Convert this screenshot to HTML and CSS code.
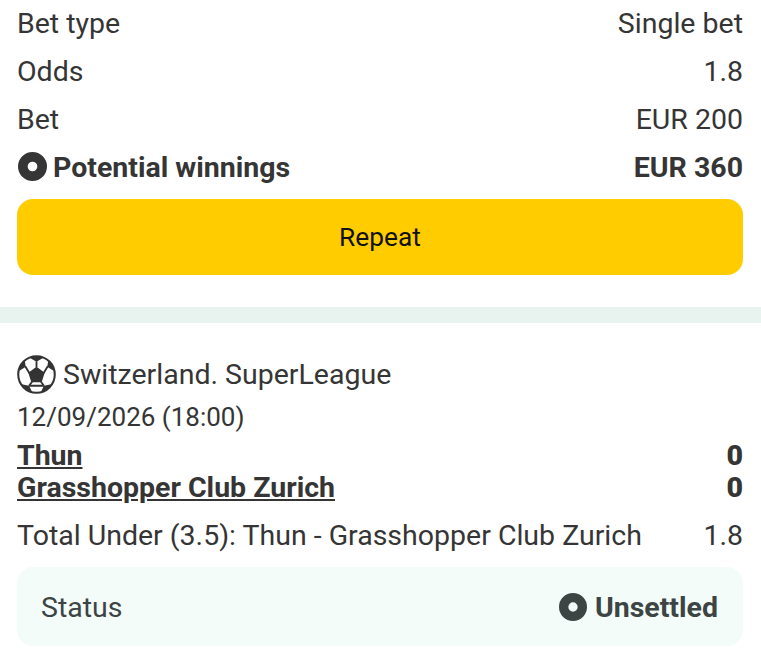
FILE: index.html
```html
<!DOCTYPE html>
<html lang="en">
<head>
<meta charset="utf-8">
<title>Bet details</title>
<link rel="stylesheet" href="styles.css">
</head>
<body>
<section class="summary">
  <div class="row"><span>Bet type</span><span>Single bet</span></div>
  <div class="row"><span>Odds</span><span>1.8</span></div>
  <div class="row"><span>Bet</span><span>EUR 200</span></div>
  <div class="row strong">
    <span class="with-icon"><svg class="dot" viewBox="0 0 30 30"><circle cx="15" cy="15" r="10" fill="none" stroke="currentColor" stroke-width="10"/></svg>Potential winnings</span>
    <span>EUR 360</span>
  </div>
  <button class="repeat">Repeat</button>
</section>
<div class="divider"></div>
<section class="event">
  <div class="league">
    <svg class="ball" viewBox="0 0 38 38">
      <circle cx="19" cy="19" r="17.800" fill="#fff" stroke="#333" stroke-width="2"/>
      <path fill="#333" d="M19 11.500l8 5.800-3 9.200h-10l-3-9.200zM11.500 2.200c5-1.600 10-1.600 15 0l-7.500 4.300zM2 15.500c.6-4.200 2.600-7.800 5.500-10.500l1 6.500zM36 15.500c-.6-4.200-2.600-7.800-5.500-10.500l-1 6.500zM4.500 28.500l7.300 1.500 3 6.200c-4.200-.9-7.800-3.900-10.300-7.700zM33.500 28.500l-7.300 1.500-3 6.200c4.200-.9 7.800-3.900 10.300-7.700z"/>
      <path fill="none" stroke="#333" stroke-width="1.800" d="M19 6v6M8 11l4 6.500M30 11l-4 6.500M14.700 26l-3 4M23.300 26l3 4M11.700 30h14.600"/>
    </svg>
    <span>Switzerland. SuperLeague</span>
  </div>
  <div class="date">12/09/2026 (18:00)</div>
  <div class="teams">
    <div class="team"><a href="#">Thun</a><b>0</b></div>
    <div class="team"><a href="#">Grasshopper Club Zurich</a><b>0</b></div>
  </div>
  <div class="row pick"><span>Total Under (3.5): Thun - Grasshopper Club Zurich</span><span>1.8</span></div>
  <div class="status">
    <span>Status</span>
    <span class="state"><svg class="dot" viewBox="0 0 30 30"><circle cx="15" cy="15" r="10" fill="none" stroke="currentColor" stroke-width="10"/></svg>Unsettled</span>
  </div>
</section>
</body>
</html>
```
FILE: styles.css
```css
* { box-sizing: border-box; }
html, body { margin: 0; padding: 0; }
body {
  width: 761px;
  height: 659px;
  overflow: hidden;
  background: #fff;
  color: #353535;
  font-family: Roboto, sans-serif;
  font-size: 28.5px;
  line-height: 48px;
}
.summary { padding: 0 18px 32px 17px; }
.row { display: flex; justify-content: space-between; height: 48px; }
.strong { font-weight: 700; }
.with-icon { display: flex; align-items: center; gap: 6px; }
.dot { width: 29px; height: 29px; flex: none; margin: 0 0 3px 1px; }
.repeat {
  display: block;
  width: 726px;
  height: 76px;
  margin-top: 7px;
  border: 0;
  border-radius: 16px;
  background: #ffcc00;
  color: #111;
  font: 400 26.300px Roboto, sans-serif;
}
.divider { height: 16px; background: #e8f2ef; }
.event { padding: 28px 18px 0 17px; }
.league { display: flex; align-items: center; gap: 7px; height: 48px; }
.ball { width: 39px; height: 39px; flex: none; margin-bottom: 1px; }
.date { height: 37px; line-height: 32px; margin-top: 2px; font-size: 26px; }
.teams { margin-top: 2px; }
.team { display: flex; justify-content: space-between; height: 32px; line-height: 32px; font-weight: 700; }
.team a { color: inherit; text-decoration: underline; }
.pick { height: 48px; margin-top: 8px; }
.status {
  display: flex;
  justify-content: space-between;
  align-items: center;
  height: 79px;
  margin-top: 7px;
  padding: 2px 25px 0 24px;
  border-radius: 16px;
  background: #f3fcf9;
  color: #3c4444;
}
.state { display: flex; align-items: center; gap: 8px; font-weight: 700; }
.state .dot { width: 28px; height: 28px; margin: 0 0 2px; }
```
